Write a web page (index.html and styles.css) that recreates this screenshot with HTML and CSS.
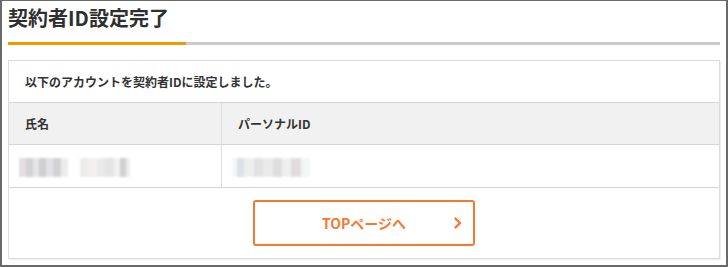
FILE: index.html
```html
<!DOCTYPE html>
<html lang="ja">
<head>
<meta charset="utf-8">
<title>契約者ID設定完了</title>
<link rel="stylesheet" href="styles.css">
</head>
<body>
<div class="frame">
  <h1 class="title">契約者ID設定完了</h1>
  <div class="rule"><span class="rule-accent"></span><span class="rule-rest"></span></div>
  <div class="card">
    <p class="message">以下のアカウントを契約者IDに設定しました。</p>
    <div class="grid">
      <div class="cell head">氏名</div>
      <div class="cell head col2">パーソナルID</div>
      <div class="cell data"><span class="mosaic m1"></span><span class="mosaic m2"></span></div>
      <div class="cell data col2"><span class="mosaic m3"></span></div>
    </div>
    <div class="actions">
      <a class="btn" href="#">
        <span class="btn-label">TOPページへ</span>
        <svg class="chev" width="8" height="12" viewBox="0 0 8 12"><path d="M1.5 1.5 L6 6 L1.5 10.5" fill="none" stroke="#f47a32" stroke-width="2.4" stroke-linecap="round" stroke-linejoin="round"/></svg>
      </a>
    </div>
  </div>
</div>
</body>
</html>
```

FILE: styles.css
```css
html, body {
  margin: 0;
  padding: 0;
  background: #fff;
}
body {
  font-family: "Noto Sans CJK JP", "Noto Sans", sans-serif;
  color: #333;
}
.frame {
  width: 728px;
  height: 267px;
  box-sizing: border-box;
  border: 2px solid #6a6a6a;
  border-top-width: 1px;
  padding: 0 6px;
  overflow: hidden;
}
.title {
  margin: 0;
  padding-top: 3px;
  font-size: 20px;
  line-height: 28px;
  font-weight: 700;
  color: #2f2f2f;
}
.rule {
  display: flex;
  height: 3px;
  margin-top: 10px;
}
.rule-accent {
  width: 178px;
  background: #f39800;
}
.rule-rest {
  flex: 1;
  background: #cbcbcb;
}
.card {
  margin-top: 15px;
  border: 1px solid #dcdcdc;
  box-shadow: 1px 1px 0 #eeeeee;
}
.message {
  margin: 0;
  height: 41px;
  display: flex;
  align-items: center;
  padding-left: 16px;
  font-size: 12px;
  font-weight: 700;
  border-bottom: 1px solid #d4d4d4;
}
.grid {
  display: grid;
  grid-template-columns: 212px 1fr;
}
.cell {
  display: flex;
  align-items: center;
  font-size: 12px;
  font-weight: 700;
  border-bottom: 1px solid #d4d4d4;
}
.col2 {
  border-left: 1px solid #dcdcdc;
}
.head {
  height: 41px;
  background: #f1f1f1;
  padding-left: 16px;
}
.data {
  height: 42px;
  padding-left: 10px;
  gap: 12px;
}
.mosaic {
  display: inline-block;
  height: 19px;
  margin-top: 2px;
  filter: blur(0.8px);
  opacity: 0.8;
}
.m1 {
  width: 49px;
  background: linear-gradient(90deg, #dcd6da 0 14%, #c9c6c9 14% 28%, #e0e0e0 28% 40%, #c4c4c6 40% 55%, #dcdce0 55% 70%, #c8c8c8 70% 86%, #e8e8e8 86% 100%);
}
.m2 {
  width: 50px;
  background: linear-gradient(90deg, #e8e8e8 0 16%, #f0eeec 16% 34%, #e6e6e6 34% 50%, #dedede 50% 68%, #eeeeee 68% 80%, #c6c6c6 80% 92%, #e8e8e8 92% 100%);
}
.m3 {
  width: 78px;
  background: linear-gradient(90deg, #f2f4f8 0 6%, #d6d9e2 6% 16%, #eaeaea 16% 28%, #dcdcde 28% 40%, #e6e6e6 40% 52%, #d8d6d8 52% 64%, #ececec 64% 76%, #dcd4d6 76% 88%, #f0f4f4 88% 100%);
}
.actions {
  display: flex;
  justify-content: center;
  padding: 12px 0 12px;
}
.btn {
  position: relative;
  box-sizing: border-box;
  width: 222px;
  height: 46px;
  border: 2px solid #f47a32;
  border-radius: 3px;
  display: flex;
  align-items: center;
  justify-content: center;
  text-decoration: none;
  color: #f47a32;
  font-size: 14px;
  font-weight: 700;
}
.chev {
  position: absolute;
  right: 11px;
  top: 50%;
  margin-top: -6px;
}
```
